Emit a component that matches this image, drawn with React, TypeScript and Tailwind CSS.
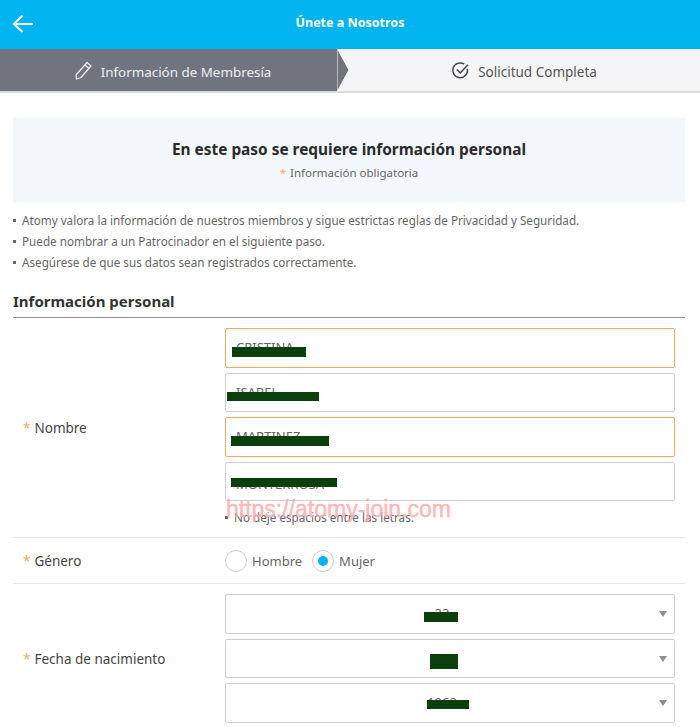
import React from "react";

const font = { fontFamily: '"Noto Sans", "Noto Sans CJK KR", sans-serif' };

function Redact({ className }: { className: string }) {
  return <span className={`absolute bg-[#0b3f0b] ${className}`} />;
}

function Bullet({ children }: { children: React.ReactNode }) {
  return (
    <li className="flex items-center gap-[6px]">
      <span className="h-[3px] w-[3px] bg-[#666]" />
      {children}
    </li>
  );
}

function NameInput({ value, active, bar, low }: { value: string; active?: boolean; bar: string; low?: boolean }) {
  return (
    <div
      className={`relative flex h-[39.500px] items-center rounded-[2px] border bg-white pl-[10px] text-[13px] text-[#666] ${
        active ? "border-[#f9a85a]" : "border-[#cfd0d6]"
      }`}
    >
      <span className={low ? "relative top-[3px]" : "relative"}>{value}</span>
      <Redact className={bar} />
    </div>
  );
}

function DateSelect({ value, bar }: { value: string; bar: string }) {
  return (
    <div className="relative flex h-[39.500px] items-center justify-center rounded-[2px] border border-[#cfcfcf] bg-white pr-[16px] text-[13px] text-[#666]">
      <span>{value}</span>
      <Redact className={bar} />
      <svg className="absolute right-[7px] top-[16px]" width="8" height="6" viewBox="0 0 8 6">
        <path d="M0 0h8L4 6z" fill="#8a8f9c" />
      </svg>
    </div>
  );
}

function Label({ text }: { text: string }) {
  return (
    <div className="flex w-[212px] items-center pt-[2px] pl-[10px] text-[13.500px] text-[#444]">
      <span className="mr-[4px] text-[#f9a85a]">*</span>
      {text}
    </div>
  );
}

export default function App() {
  return (
    <div style={font} className="relative h-[727px] w-[700px] overflow-hidden bg-white">
      <header className="relative flex h-[49px] items-center justify-center bg-[#00b5ef]">
        <svg className="absolute left-[12px] top-[13px]" width="22" height="20" viewBox="0 0 22 20" fill="none" stroke="#fff" strokeWidth="2">
          <path d="M21 11H2M10.500 2.500 2 11l8.500 8" />
        </svg>
        <h1 className="relative -top-[1px] text-[12.500px] font-bold text-white">Únete a Nosotros</h1>
      </header>

      <div className="flex h-[44px] border-b-2 border-[#dcdcdc] bg-[#f5f5f7]">
        <div className="relative flex w-[338px] items-center justify-center gap-[8px] bg-[#6f747e] pl-[7px] text-[13.400px] text-[#eef0f2]">
          <svg width="19" height="19" viewBox="0 0 19 19" fill="none" stroke="#eef0f2" strokeWidth="1.200">
            <path d="M13 1.500 17 5 7 16.500l-4.500 1.500L2 14z" strokeLinejoin="round" />
            <path d="M11 4l4 3.500" />
          </svg>
          <span className="relative top-[2px]">Información de Membresía</span>
          <svg className="absolute -right-[13px] top-0" width="14" height="42" viewBox="0 0 14 42">
            <path d="M0-1l12 22L0 43z" fill="#6f747e" stroke="#fff" strokeWidth="1" />
          </svg>
        </div>
        <div className="flex flex-1 items-center justify-center gap-[8px] pl-[10px] text-[13.500px] text-[#555]">
          <svg width="19" height="19" viewBox="0 0 18 18" fill="none" stroke="#444" strokeWidth="1.400">
            <path d="M15.500 7.500A7 7 0 1 1 12.500 3" />
            <path d="M5.500 8l3.300 3.300L16 3.500" />
          </svg>
          <span className="relative top-[2px]">Solicitud Completa</span>
        </div>
      </div>

      <main className="pr-[15px] pl-[13px] pt-[25px]">
        <section className="flex h-[84px] flex-col items-center bg-[#f2f8fb] pt-[20px]">
          <h2 className="text-[15.400px] leading-[24px] font-bold text-[#2b2b2b]">En este paso se requiere información personal</h2>
          <p className="pt-[1px] text-[11.500px] leading-[20px] text-[#666]">
            <span className="mr-[4px] text-[#f9a85a]">*</span>Información obligatoria
          </p>
        </section>

        <ul className="pt-[8px] text-[11.700px] leading-[21px] text-[#666]">
          <Bullet>Atomy valora la información de nuestros miembros y sigue estrictas reglas de Privacidad y Seguridad.</Bullet>
          <Bullet>Puede nombrar a un Patrocinador en el siguiente paso.</Bullet>
          <Bullet>Asegúrese de que sus datos sean registrados correctamente.</Bullet>
        </ul>

        <h3 className="mt-[16px] h-[28px] text-[15px] leading-[24px] font-bold text-[#333]">Información personal</h3>

        <div className="flex h-[221px] border-t border-t-[#8a8d92] border-b border-b-[#e8e8e8]">
          <Label text="Nombre" />
          <div className="flex flex-1 flex-col gap-[5px] pt-[10px] pr-[10px]">
            <NameInput value="CRISTINA" active bar="left-[6px] top-[18px] h-[9.500px] w-[74px]" />
            <NameInput value="ISABEL" bar="left-[1px] top-[18px] h-[9.500px] w-[92px]" />
            <NameInput value="MARTINEZ" active bar="left-[5px] top-[18px] h-[9.500px] w-[98px]" />
            <NameInput value="MONTERROSA" low bar="left-[5px] top-[15px] h-[9.500px] w-[106px]" />
            <ul className="pt-[3px] text-[11.700px] leading-[16px] text-[#666]">
              <Bullet>No deje espacios entre las letras.</Bullet>
            </ul>
          </div>
        </div>

        <div className="flex h-[46px] border-b border-[#e8e8e8]">
          <Label text="Género" />
          <div className="flex items-center text-[13px] text-[#666]">
            <span className="h-[22px] w-[22px] rounded-full border border-[#cfcfcf]" />
            <span className="relative top-[1px] ml-[5px]">Hombre</span>
            <span className="ml-[10px] flex h-[22px] w-[22px] items-center justify-center rounded-full border border-[#cfcfcf]">
              <span className="h-[10px] w-[10px] rounded-full bg-[#00b5ef]" />
            </span>
            <span className="relative top-[1px] ml-[5px]">Mujer</span>
          </div>
        </div>

        <div className="flex h-[149px]">
          <Label text="Fecha de nacimiento" />
          <div className="flex flex-1 flex-col gap-[5px] pt-[10px] pr-[10px]">
            <DateSelect value="22" bar="left-[198px] top-[17px] h-[10px] w-[34px]" />
            <DateSelect value="" bar="left-[204px] top-[14px] h-[15px] w-[28px]" />
            <DateSelect value="1962" bar="left-[201px] top-[16px] h-[9px] w-[42px]" />
          </div>
        </div>
      </main>

      <div
        className="pointer-events-none absolute left-[226px] top-[495px] text-[23px] leading-[28px] text-[#ffa8a8]/80 [-webkit-text-stroke:0.4px_#ffb0b0]"
        style={{ fontFamily: '"Liberation Sans", sans-serif' }}
      >
        https://atomy-join.com
      </div>
    </div>
  );
}
